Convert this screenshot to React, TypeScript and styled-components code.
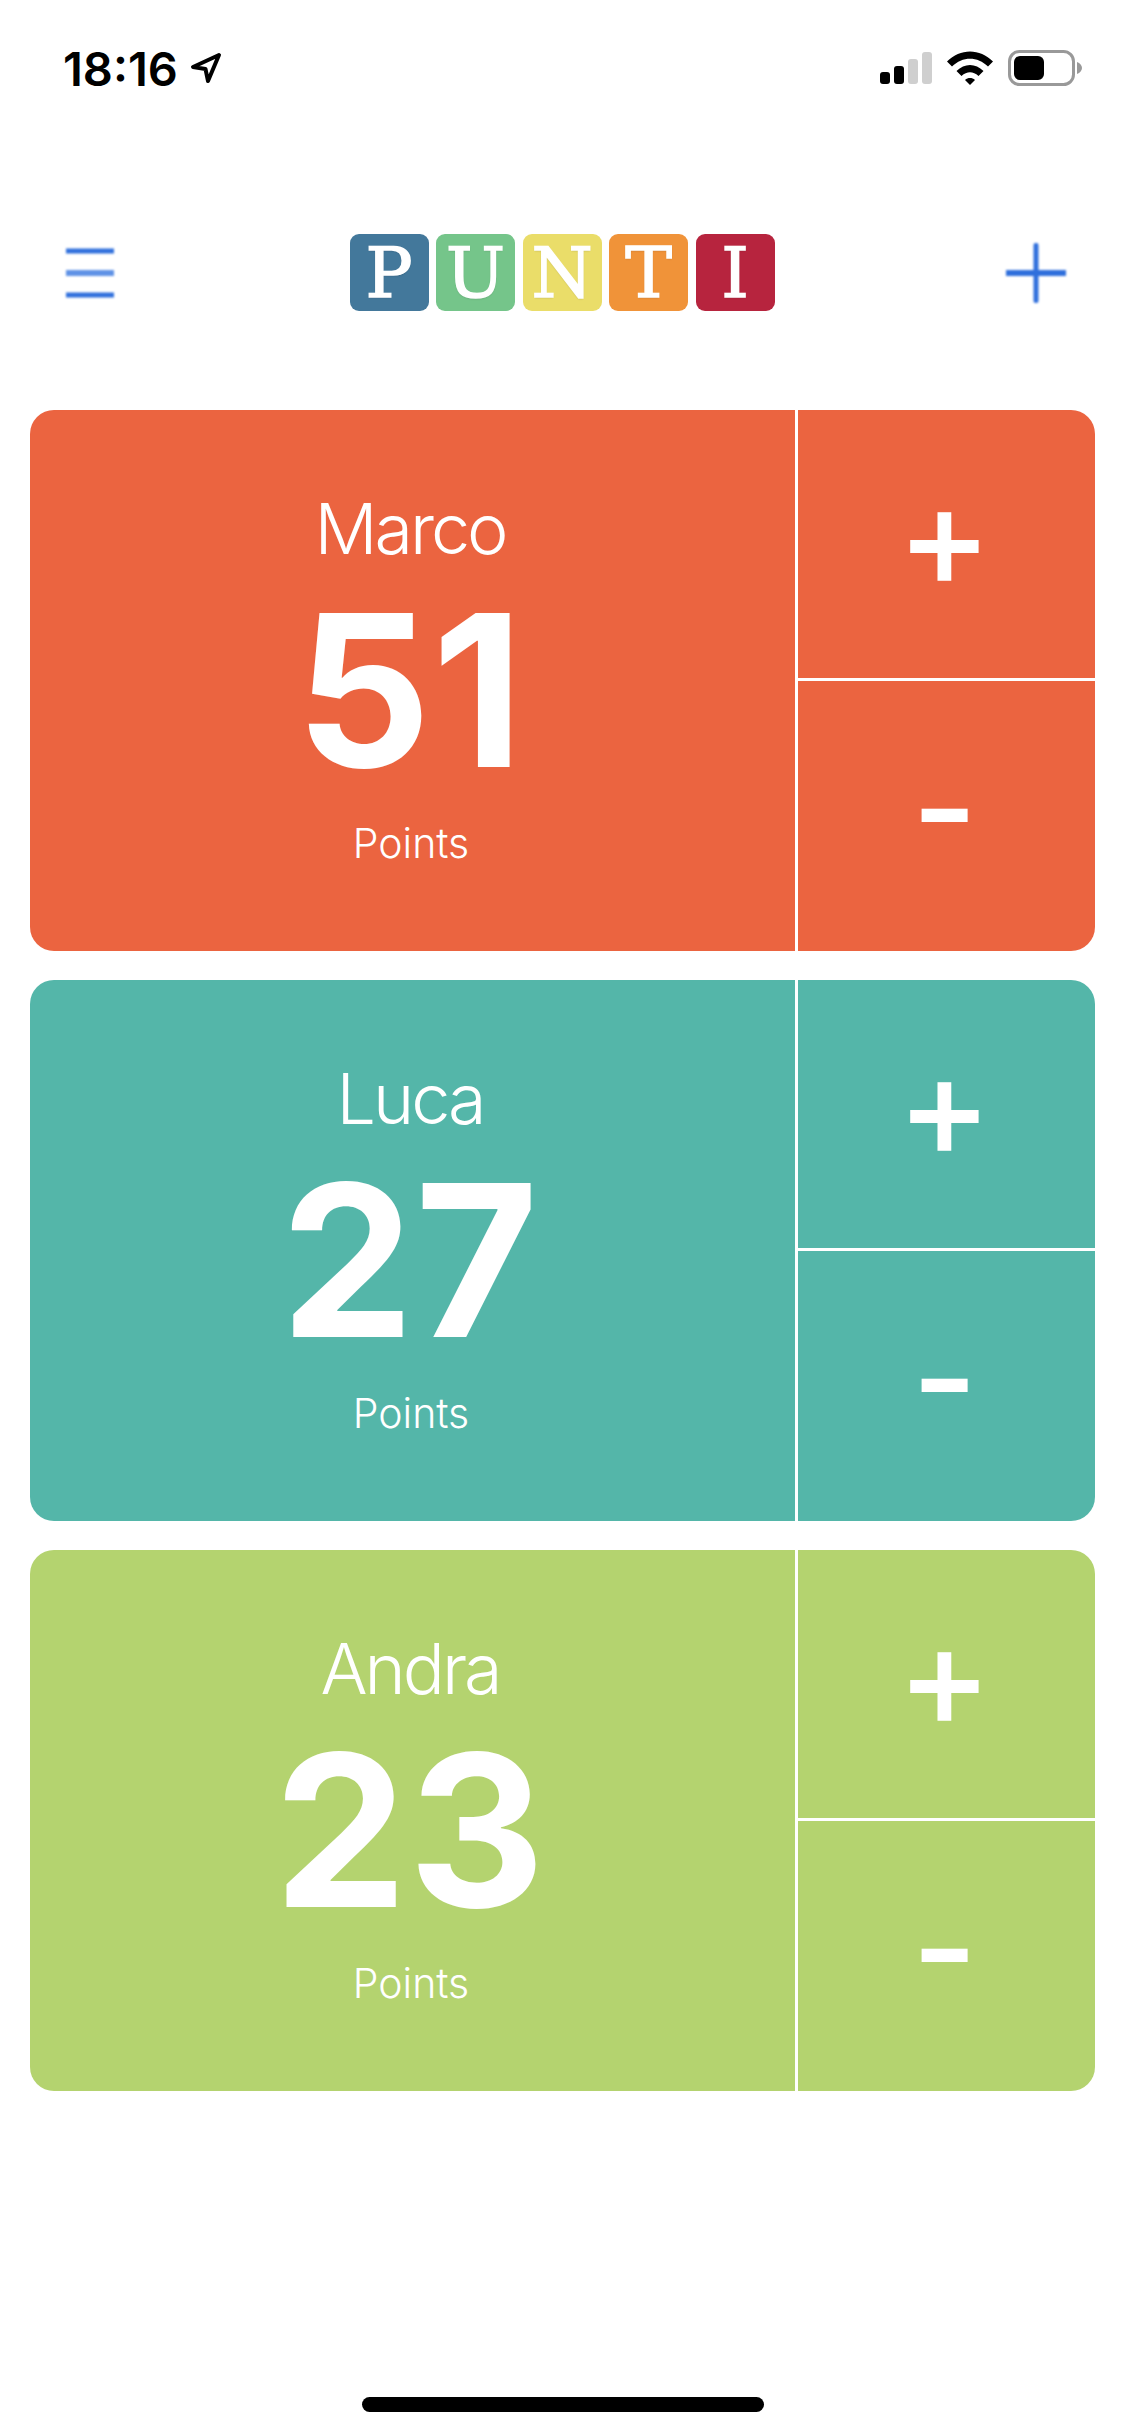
import { createGlobalStyle, styled } from "styled-components";

type Player = {
  name: string;
  score: number;
  color: string;
};

const players: Player[] = [
  { name: "Marco", score: 51, color: "#eb6440" },
  { name: "Luca", score: 27, color: "#54b6a9" },
  { name: "Andra", score: 23, color: "#b4d36f" },
];

const logoTiles = [
  { letter: "P", color: "#43789b" },
  { letter: "U", color: "#75c58a" },
  { letter: "N", color: "#eadd69" },
  { letter: "T", color: "#f09339" },
  { letter: "I", color: "#b7243e" },
];

const App = () => {
  return (
    <Page>
      <GlobalStyle />
      <StatusBar>
        <TimeGroup>
          <Time>18:16</Time>
          <svg width="32" height="32" viewBox="0 0 32 32" fill="none">
            <path
              d="M29 3 L3 15 L15.5 17 L18 29 Z"
              stroke="#000"
              strokeWidth="4"
              strokeLinejoin="round"
            />
          </svg>
        </TimeGroup>
        <StatusIcons>
          <svg width="52" height="34" viewBox="0 0 52 34">
            <rect x="0" y="21" width="10" height="12" rx="3" fill="#000" />
            <rect x="14" y="15" width="10" height="18" rx="3" fill="#000" />
            <rect x="28" y="8" width="10" height="25" rx="3" fill="#cfcfcf" />
            <rect x="42" y="1" width="10" height="32" rx="3" fill="#cfcfcf" />
          </svg>
          <svg width="46" height="34" viewBox="0 0 46 34">
            <path d="M0 10.5 C13 -3 33 -3 46 10.5 L41 15.5 C30.5 5 15.5 5 5 15.5 Z" fill="#000" />
            <path d="M9.5 20 C17.5 12 28.5 12 36.5 20 L31.5 25 C26 20 20 20 14.5 25 Z" fill="#000" />
            <path d="M18 29 C21 26.4 25 26.4 28 29 L23 34 Z" fill="#000" />
          </svg>
          <svg width="74" height="36" viewBox="0 0 74 36">
            <rect x="1.5" y="1.5" width="64" height="33" rx="10" fill="none" stroke="#999" strokeWidth="3" />
            <rect x="6" y="6" width="30" height="24" rx="6" fill="#000" />
            <path d="M69 12 C72 13 74 15.5 74 18 C74 20.5 72 23 69 24 Z" fill="#999" />
          </svg>
        </StatusIcons>
      </StatusBar>

      <Header>
        <NavIcon>
          <svg width="48" height="54" viewBox="0 0 48 54">
            <rect x="0" y="2.5" width="48" height="5" fill="#2f6fdc" />
            <rect x="0" y="24" width="48" height="6" fill="#5f92e6" />
            <rect x="0" y="46.5" width="48" height="5" fill="#2f6fdc" />
          </svg>
        </NavIcon>
        <Logo>
          {logoTiles.map(tile => (
            <LogoTile key={tile.letter} $color={tile.color}>
              {tile.letter}
            </LogoTile>
          ))}
        </Logo>
        <NavIcon>
          <svg width="60" height="60" viewBox="0 0 60 60">
            <rect x="27.5" y="0" width="5" height="60" rx="2" fill="#2f6fdc" />
            <rect x="0" y="27" width="60" height="6" fill="#2f6fdc" />
          </svg>
        </NavIcon>
      </Header>

      <CardList>
        {players.map(player => (
          <Card key={player.name} $color={player.color}>
            <Summary>
              <Name>{player.name}</Name>
              <Score>{player.score}</Score>
              <Label>Points</Label>
            </Summary>
            <Actions>
              <ActionButton>+</ActionButton>
              <ActionButton>-</ActionButton>
            </Actions>
          </Card>
        ))}
      </CardList>

      <HomeIndicator />
    </Page>
  );
};

export default App;

const GlobalStyle = createGlobalStyle`
  html, body {
    margin: 0;
    padding: 0;
    background: #fff;
  }
`;

const Page = styled.div`
  display: flex;
  flex-direction: column;
  width: 1125px;
  height: 2436px;
  overflow: hidden;
  background: #fff;
  font-family: Inter, "Liberation Sans", sans-serif;
`;

const StatusBar = styled.div`
  display: flex;
  align-items: center;
  justify-content: space-between;
  height: 68px;
  margin-top: 34px;
  padding: 0 43px 0 63px;
`;

const TimeGroup = styled.div`
  display: flex;
  align-items: center;
  gap: 12px;
`;

const Time = styled.span`
  font-size: 47px;
  font-weight: 600;
  color: #000;
`;

const StatusIcons = styled.div`
  display: flex;
  align-items: center;
  gap: 15px;
`;

const Header = styled.div`
  display: flex;
  align-items: center;
  justify-content: space-between;
  height: 77px;
  margin-top: 132px;
  padding: 0 59px 0 66px;
`;

const NavIcon = styled.div`
  display: flex;
  filter: blur(0.9px);
`;

const Logo = styled.div`
  display: flex;
  gap: 7.5px;
  margin-left: 4px;
`;

const LogoTile = styled.div<{ $color: string }>`
  display: flex;
  align-items: center;
  justify-content: center;
  width: 79px;
  height: 77px;
  border-radius: 9px;
  background: ${({ $color }) => $color};
  color: #fff;
  font-family: "DejaVu Serif", "Liberation Serif", serif;
  font-size: 70px;
  font-weight: 400;
  line-height: 1;
  -webkit-text-stroke: 1.5px #fff;
  text-shadow: 0 1px 2px rgba(0, 0, 0, 0.2);
`;

const CardList = styled.div`
  display: flex;
  flex-direction: column;
  gap: 29px;
  margin-top: 99px;
  padding: 0 30px;
`;

const Card = styled.div<{ $color: string }>`
  display: flex;
  height: 541px;
  border-radius: 24px;
  overflow: hidden;
  background: ${({ $color }) => $color};
  color: #fff;
`;

const Summary = styled.div`
  display: flex;
  flex: 1;
  flex-direction: column;
  align-items: center;
  padding: 76px 5px 0 0;
  border-right: 3px solid #fff;
`;

const Name = styled.div`
  font-size: 70px;
  font-weight: 300;
  line-height: 85px;
  letter-spacing: -3px;
`;

const Score = styled.div`
  margin-top: 9px;
  font-size: 212px;
  font-weight: 700;
  line-height: 220px;
  letter-spacing: 1px;
`;

const Label = styled.div`
  margin-top: 19px;
  padding-left: 2px;
  font-size: 41px;
  font-weight: 300;
  line-height: 48px;
`;

const Actions = styled.div`
  display: flex;
  flex-direction: column;
  width: 297px;
`;

const ActionButton = styled.button`
  display: flex;
  flex: 0 0 268px;
  align-items: center;
  justify-content: center;
  padding: 0 4px 19px 0;
  border: none;
  background: transparent;
  color: #fff;
  font-family: inherit;
  font-size: 142px;
  font-weight: 500;
  line-height: 1;

  & + & {
    flex: 1;
    border-top: 3px solid #fff;
  }
`;

const HomeIndicator = styled.div`
  width: 402px;
  height: 15px;
  margin: auto auto 24px;
  border-radius: 8px;
  background: #000;
`;
